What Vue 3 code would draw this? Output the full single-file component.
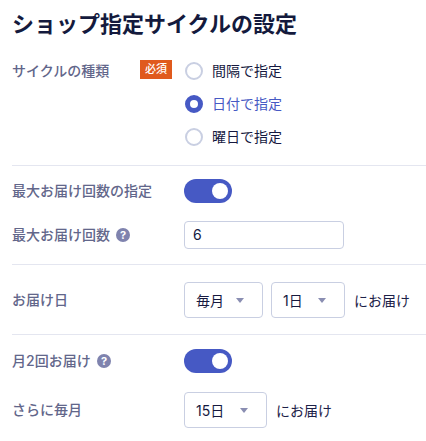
<script setup>
const radios = [
  { label: '間隔で指定', on: false },
  { label: '日付で指定', on: true },
  { label: '曜日で指定', on: false },
]
</script>

<template>
  <div class="page">
    <h1 class="title">ショップ指定サイクルの設定</h1>

    <section class="group first">
      <div class="row">
        <div class="label">
          <span class="label-name">サイクルの種類</span>
          <span class="badge">必須</span>
        </div>
        <div class="radios">
          <div v-for="r in radios" :key="r.label" class="radio-row">
            <span class="radio" :class="{ on: r.on }"></span>
            <span class="radio-text" :class="{ on: r.on }">{{ r.label }}</span>
          </div>
        </div>
      </div>
    </section>

    <section class="group second">
      <div class="row toggle-row">
        <div class="label"><span>最大お届け回数の指定</span></div>
        <span class="toggle"><span class="knob"></span></span>
      </div>
      <div class="row input-row">
        <div class="label">
          <span>最大お届け回数</span>
          <svg class="help" viewBox="0 0 14 14"><circle cx="7" cy="7" r="7" fill="#7f83ae" /><text x="7" y="10.8" text-anchor="middle" class="help-q">?</text></svg>
        </div>
        <div class="input">6</div>
      </div>
    </section>

    <section class="group third">
      <div class="row">
        <div class="label"><span>お届け日</span></div>
        <div class="selects">
          <div class="select w79"><span>毎月</span><i class="caret"></i></div>
          <div class="select w74"><span>1日</span><i class="caret"></i></div>
          <span class="suffix">にお届け</span>
        </div>
      </div>
    </section>

    <section class="group fourth">
      <div class="row toggle-row">
        <div class="label">
          <span>月2回お届け</span>
          <svg class="help" viewBox="0 0 14 14"><circle cx="7" cy="7" r="7" fill="#7f83ae" /><text x="7" y="10.8" text-anchor="middle" class="help-q">?</text></svg>
        </div>
        <span class="toggle"><span class="knob"></span></span>
      </div>
      <div class="row select-row">
        <div class="label"><span>さらに毎月</span></div>
        <div class="selects">
          <div class="select w83"><span>15日</span><i class="caret"></i></div>
          <span class="suffix">にお届け</span>
        </div>
      </div>
    </section>
  </div>
</template>

<style>
html, body { margin: 0; background: #fff; }
</style>

<style scoped>
.page {
  width: 426px;
  height: 441px;
  overflow: hidden;
  box-sizing: border-box;
  padding-left: 12px;
  font-family: Inter, "Noto Sans CJK JP", sans-serif;
  color: #16193f;
  font-size: 14px;
}
.title {
  margin: 0;
  padding-top: 9px;
  font-size: 22px;
  line-height: 30px;
  font-weight: 700;
  color: #141a3d;
}
.group { border-bottom: 1px solid #e4e6f0; }
.first { padding: 15px 0 12px; }
.second { padding: 13px 0 15px; }
.third { padding: 17px 0 16px; }
.fourth { padding: 14px 0 0; border-bottom: 0; }
.row { display: flex; align-items: center; }
.first .row { align-items: flex-start; }
.first .label { height: 33px; }
.label {
  width: 172px;
  flex: none;
  display: flex;
  align-items: center;
  font-weight: 500;
  color: #62668a;
  line-height: 20px;
}
.label-name { width: 128px; flex: none; margin-top: 1px; }
.badge {
  width: 32px;
  height: 19px;
  background: #e05a1d;
  color: #fff;
  font-size: 11px;
  line-height: 19px;
  text-align: center;
  margin-top: -2px;
}
.radio-row { display: flex; align-items: center; height: 33px; }
.radio {
  width: 18px;
  height: 18px;
  box-sizing: border-box;
  border: 2px solid #c9cfe2;
  border-radius: 50%;
  margin: 0 9px 0 1px;
  background: #fff;
}
.radio.on { border: 5px solid #4659c4; }
.radio-text { color: #16193f; margin-top: -1px; }
.radio-text.on { color: #4659c4; }
.toggle {
  display: flex;
  justify-content: flex-end;
  align-items: center;
  box-sizing: border-box;
  width: 48px;
  height: 24px;
  padding-right: 4px;
  border-radius: 12px;
  background: #4659c4;
}
.knob { width: 16px; height: 16px; border-radius: 50%; background: #fff; }
.input-row { margin-top: 18px; }
.help { width: 14px; height: 14px; margin-left: 6px; flex: none; }
.help-q { fill: #fff; font-size: 11px; font-weight: 700; font-family: Inter, sans-serif; }
.input {
  width: 160px;
  height: 28px;
  box-sizing: border-box;
  border: 1px solid #c9cfe2;
  border-radius: 4px;
  padding-left: 8px;
  line-height: 25px;
}
.selects { display: flex; align-items: center; gap: 8px; }
.select {
  height: 36px;
  box-sizing: border-box;
  display: flex;
  align-items: center;
  justify-content: space-between;
  border: 1px solid #c9cfe2;
  border-radius: 4px;
  padding: 0 18px 0 11px;
}
.w79 { width: 79px; }
.w74 { width: 74px; }
.w83 { width: 83px; }
.caret {
  width: 0;
  height: 0;
  border-left: 4px solid transparent;
  border-right: 4px solid transparent;
  border-top: 5px solid #8a8eb2;
  margin-top: 1px;
}
.suffix { margin-left: 1px; color: #1c2148; }
.select-row { margin-top: 19px; }
</style>
